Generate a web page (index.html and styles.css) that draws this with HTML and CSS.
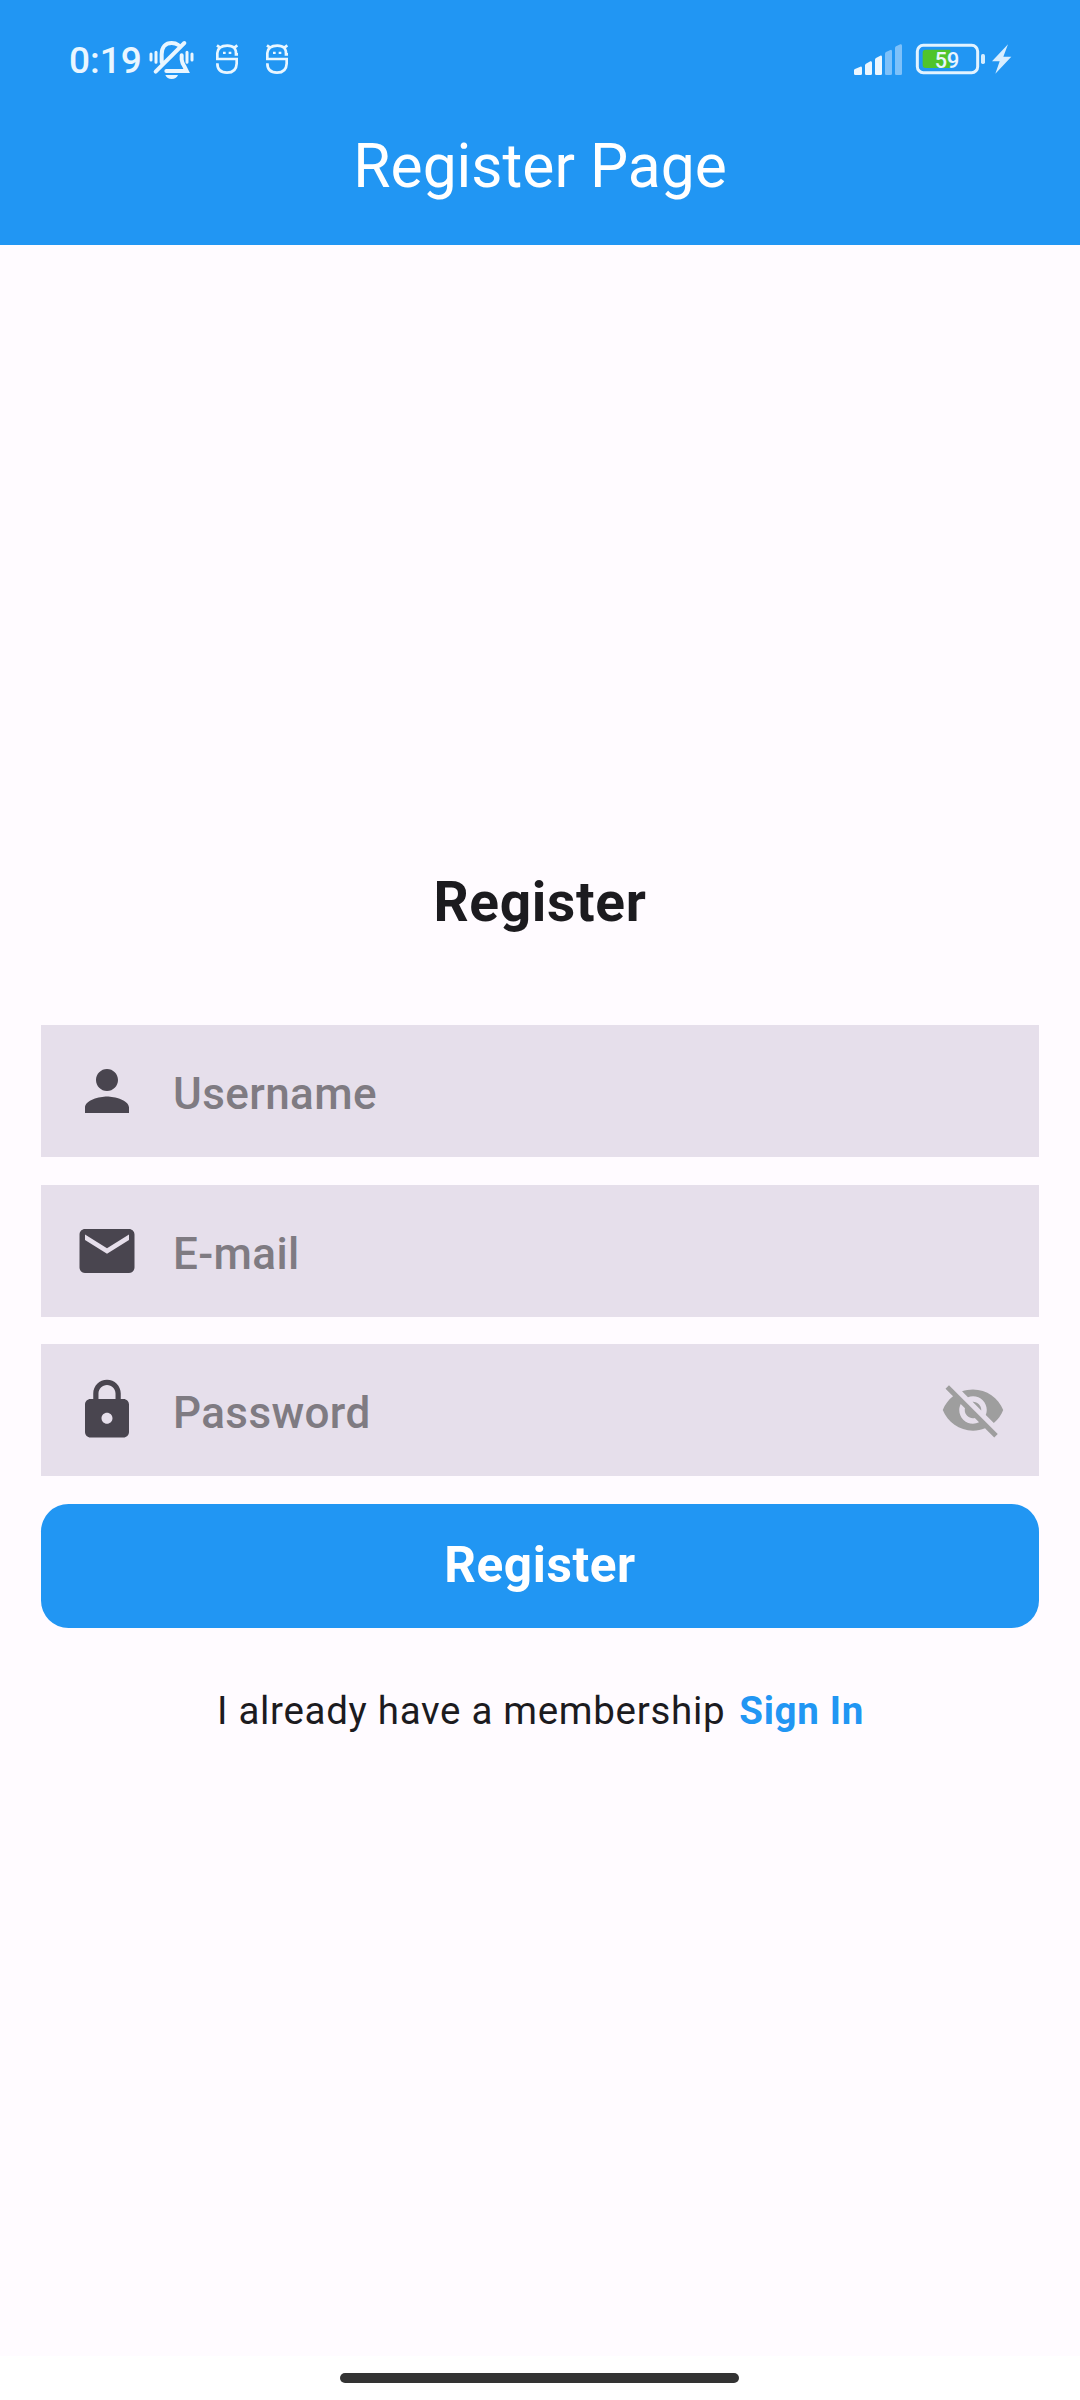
FILE: index.html
```html
<!DOCTYPE html>
<html lang="en">
<head>
<meta charset="utf-8">
<title>Register Page</title>
<link rel="stylesheet" href="styles.css">
</head>
<body>
<div class="screen">
  <header class="app-header">
    <div class="status-bar">
      <div class="status-group">
        <span class="clock">0:19</span>
        <svg class="icon-mute" viewBox="295 57 141 126" width="47" height="42" fill="none" stroke="#e9f6ff" stroke-width="12" stroke-linecap="round">
          <path d="M336 127V103C336 80 348 69 366 69Q378 69 386 75M318 155L404 69M396 106V119Q397 129 404 139L411 153H350"/>
          <path d="M304 102V120M319 97V127M412 97V127M427 102V120" stroke-width="9"/>
          <path d="M347 165H385Q380 177 366 177Q352 177 347 165Z" fill="#e9f6ff" stroke="none"/>
        </svg>
        <svg class="icon-app" viewBox="495 69 75 96" width="25" height="32" fill="none" stroke="#e9f6ff" stroke-width="8">
          <path d="M564 103H558Q560 77 532 77Q504 77 502 99V117H560V131Q559 158 531 158Q502 158 502 130M501 76L513 85M562 76L550 85"/>
          <path d="M523 95V102M540 95V102"/>
        </svg>
        <svg class="icon-app icon-app-second" viewBox="495 69 75 96" width="25" height="32" fill="none" stroke="#e9f6ff" stroke-width="8">
          <path d="M564 103H558Q560 77 532 77Q504 77 502 99V117H560V131Q559 158 531 158Q502 158 502 130M501 76L513 85M562 76L550 85"/>
          <path d="M523 95V102M540 95V102"/>
        </svg>
      </div>
      <div class="status-group status-right">
        <svg viewBox="69 69 150 99" width="50" height="33" fill="#ecf7ff">
          <path d="M72 151Q72 148 75 147L91 140Q96 139 96 144V161Q96 165 92 165H76Q72 165 72 161ZM105 136Q105 133 108 131L121 124Q126 122 126 128V161Q126 165 122 165H109Q105 165 105 161ZM135 119Q135 116 138 114L151 107Q156 106 156 111V161Q156 165 152 165H139Q135 165 135 161Z"/>
          <path d="M165 102Q165 98 168 96L181 90Q186 88 186 94V161Q186 165 182 165H169Q165 165 165 161ZM195 85Q195 81 198 79L211 73Q216 71 216 77V161Q216 165 212 165H199Q195 165 195 161Z" fill="#7dc1fa"/>
        </svg>
        <svg class="icon-battery" viewBox="255 69 210 96" width="70" height="32">
          <rect x="262" y="76" width="181" height="82" rx="18" fill="none" stroke="#e2f3ff" stroke-width="9"/>
          <path d="M287 89H361V144H287Q278 144 278 135V98Q278 89 287 89Z" fill="#50c42c"/>
          <rect x="453" y="102" width="12" height="30" rx="5" fill="#d5edff"/>
          <text x="351" y="143" class="battery-level">59</text>
        </svg>
        <svg class="icon-bolt" viewBox="483 69 63 96" width="21" height="32" fill="#d8eeff">
          <path d="M534 73L486 124H509L496 161L544 110H520Z"/>
        </svg>
      </div>
    </div>
    <h1 class="page-title">Register Page</h1>
  </header>

  <main class="content">
    <h2 class="form-title">Register</h2>
    <form class="form">
      <label class="field">
        <svg class="icon" viewBox="0 0 24 24"><path d="M12 12c2.210 0 4-1.790 4-4s-1.790-4-4-4-4 1.790-4 4 1.790 4 4 4zm0 2c-2.670 0-8 1.340-8 4v2h16v-2c0-2.660-5.330-4-8-4z"/></svg>
        <span class="hint">Username</span>
      </label>
      <label class="field">
        <svg class="icon" viewBox="0 0 24 24"><path d="M20 4H4c-1.100 0-1.990.9-1.990 2L2 18c0 1.100.9 2 2 2h16c1.100 0 2-.9 2-2V6c0-1.100-.9-2-2-2zm0 4l-8 5-8-5V6l8 5 8-5v2z"/></svg>
        <span class="hint">E-mail</span>
      </label>
      <label class="field">
        <svg class="icon" viewBox="0 0 24 24"><path d="M18 8h-1V6c0-2.760-2.240-5-5-5S7 3.240 7 6v2H6c-1.100 0-2 .9-2 2v10c0 1.100.9 2 2 2h12c1.100 0 2-.9 2-2V10c0-1.100-.9-2-2-2zm-6 9c-1.100 0-2-.9-2-2s.9-2 2-2 2 .9 2 2-.9 2-2 2zm3.100-9H8.900V6c0-1.710 1.390-3.100 3.100-3.100s3.100 1.390 3.100 3.100v2z"/></svg>
        <span class="hint">Password</span>
        <svg class="icon icon-toggle" viewBox="0 0 24 24"><path d="M12 7c2.760 0 5 2.240 5 5 0 .65-.13 1.260-.36 1.830l2.920 2.920c1.510-1.260 2.700-2.890 3.430-4.750-1.730-4.390-6-7.500-11-7.500-1.400 0-2.740.25-3.980.7l2.160 2.160C10.740 7.130 11.350 7 12 7zM2 4.270l2.280 2.280.46.46C3.080 8.300 1.780 10.020 1 12c1.730 4.390 6 7.500 11 7.500 1.550 0 3.030-.3 4.380-.84l.42.42L19.730 22 21 20.730 3.270 3 2 4.270zM7.530 9.800l1.550 1.550c-.05.21-.08.43-.08.65 0 1.660 1.340 3 3 3 .22 0 .44-.03.65-.08l1.550 1.550c-.67.33-1.410.53-2.200.53-2.760 0-5-2.240-5-5 0-.79.2-1.530.53-2.200zm4.310-.78l3.150 3.150.02-.16c0-1.660-1.340-3-3-3l-.17.01z"/></svg>
      </label>
      <button class="submit" type="button">Register</button>
    </form>
    <p class="membership"><span>I already have a membership</span><a class="sign-in">Sign In</a></p>
  </main>
  <footer class="nav-bar"><div class="nav-handle"></div></footer>
</div>
</body>
</html>
```
FILE: styles.css
```css
* { box-sizing: border-box; }

body {
  margin: 0;
  font-family: Roboto, sans-serif;
  color: #1c1b1f;
}

.screen {
  display: flex;
  flex-direction: column;
  width: 1080px;
  height: 2400px;
  background: #fffbff;
  overflow: hidden;
}

svg { display: block; flex: none; }

.app-header {
  height: 245px;
  background: #2196f3;
  color: #fff;
}

.status-bar {
  display: flex;
  justify-content: space-between;
  height: 88px;
  padding: 39px 68px 0 69px;
}

.status-group { display: flex; align-items: flex-start; }
.status-right { padding-top: 4px; }

.clock {
  width: 79px;
  font-size: 37px;
  line-height: 44px;
  font-weight: 500;
  color: #e9f6ff;
}

.icon-app { margin: 4px 0 0 20px; }
.icon-app-second { margin-left: 25px; }
.icon-battery { margin-left: 12px; }
.icon-bolt { margin-left: 6px; }

.battery-level {
  font-size: 65px;
  font-weight: 500;
  fill: #e9f6ff;
  text-anchor: middle;
}

.page-title {
  margin: 0;
  font-size: 60.5px;
  line-height: 157px;
  height: 157px;
  font-weight: 400;
  text-align: center;
}

.content {
  flex: 1;
  padding: 625px 41px 0;
}

.form-title {
  margin: 0;
  height: 155px;
  font-size: 55px;
  line-height: 64px;
  font-weight: 700;
  letter-spacing: 0.69px;
  text-align: center;
}

.form {
  display: flex;
  flex-direction: column;
  gap: 27.3px;
}

.field {
  display: flex;
  align-items: center;
  height: 132.3px;
  padding: 0 33px;
  background: #e6dfeb;
}

.icon { width: 66px; height: 66px; fill: #49454f; }
.icon-toggle { margin-left: auto; fill: #9e9e9e; }

.hint {
  margin-left: 33px;
  padding-top: 6px;
  font-size: 44px;
  line-height: 52px;
  font-weight: 500;
  letter-spacing: 0.4px;
  color: #7f7b82;
}

.submit {
  height: 124px;
  padding: 0 0 2px;
  border: 0;
  border-radius: 27.5px;
  background: #2196f3;
  color: #fff;
  font-family: inherit;
  font-size: 49.5px;
  font-weight: 700;
  letter-spacing: 0.6px;
}

.membership {
  display: flex;
  justify-content: center;
  gap: 14px;
  margin: 60px 0 0;
  padding-left: 1px;
  font-size: 38.5px;
  line-height: 46px;
  letter-spacing: 0.69px;
}

.sign-in { color: #2196f3; font-weight: 700; }

.nav-bar {
  height: 44px;
  padding-top: 17px;
  background: #fff;
}

.nav-handle {
  width: 399px;
  height: 10px;
  margin-left: 340px;
  border-radius: 5px;
  background: #333;
}
```
